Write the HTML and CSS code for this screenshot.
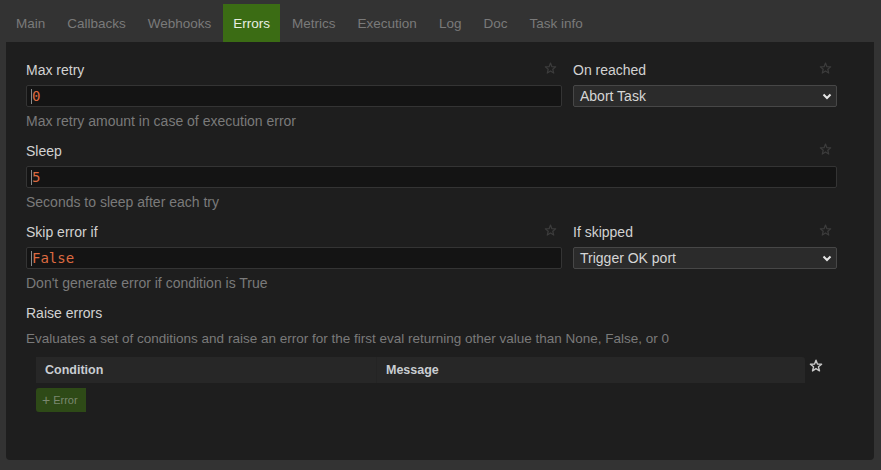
FILE: index.html
```html
<!DOCTYPE html>
<html>
<head>
<meta charset="utf-8">
<link rel="stylesheet" href="styles.css">
</head>
<body>
<nav class="tabs">
  <a class="tab">Main</a>
  <a class="tab">Callbacks</a>
  <a class="tab">Webhooks</a>
  <a class="tab active">Errors</a>
  <a class="tab">Metrics</a>
  <a class="tab">Execution</a>
  <a class="tab">Log</a>
  <a class="tab">Doc</a>
  <a class="tab">Task info</a>
</nav>
<main class="panel">
  <div class="row two">
    <div class="field">
      <div class="field-head"><span class="label">Max retry</span><svg class="star" viewBox="0 0 12 12"><path d="M6 1 L7.3 4.4 L10.8 4.5 L8.1 6.7 L9 10.2 L6 8.2 L3 10.2 L3.9 6.7 L1.2 4.5 L4.7 4.4 Z"/></svg></div>
      <div class="input"><span class="caret"></span><span class="code">0</span></div>
    </div>
    <div class="field">
      <div class="field-head"><span class="label">On reached</span><svg class="star" viewBox="0 0 12 12"><path d="M6 1 L7.3 4.4 L10.8 4.5 L8.1 6.7 L9 10.2 L6 8.2 L3 10.2 L3.9 6.7 L1.2 4.5 L4.7 4.4 Z"/></svg></div>
      <div class="select"><span>Abort Task</span><svg class="chev" viewBox="0 0 10 7"><path d="M1.5 1.5 L5 5 L8.5 1.5"/></svg></div>
    </div>
  </div>
  <p class="help">Max retry amount in case of execution error</p>

  <div class="row">
    <div class="field">
      <div class="field-head"><span class="label">Sleep</span><svg class="star" viewBox="0 0 12 12"><path d="M6 1 L7.3 4.4 L10.8 4.5 L8.1 6.7 L9 10.2 L6 8.2 L3 10.2 L3.9 6.7 L1.2 4.5 L4.7 4.4 Z"/></svg></div>
      <div class="input"><span class="caret"></span><span class="code">5</span></div>
    </div>
  </div>
  <p class="help">Seconds to sleep after each try</p>

  <div class="row two">
    <div class="field">
      <div class="field-head"><span class="label">Skip error if</span><svg class="star" viewBox="0 0 12 12"><path d="M6 1 L7.3 4.4 L10.8 4.5 L8.1 6.7 L9 10.2 L6 8.2 L3 10.2 L3.9 6.7 L1.2 4.5 L4.7 4.4 Z"/></svg></div>
      <div class="input"><span class="caret"></span><span class="code">False</span></div>
    </div>
    <div class="field">
      <div class="field-head"><span class="label">If skipped</span><svg class="star" viewBox="0 0 12 12"><path d="M6 1 L7.3 4.4 L10.8 4.5 L8.1 6.7 L9 10.2 L6 8.2 L3 10.2 L3.9 6.7 L1.2 4.5 L4.7 4.4 Z"/></svg></div>
      <div class="select"><span>Trigger OK port</span><svg class="chev" viewBox="0 0 10 7"><path d="M1.5 1.5 L5 5 L8.5 1.5"/></svg></div>
    </div>
  </div>
  <p class="help">Don't generate error if condition is True</p>

  <div class="section-title">Raise errors</div>
  <p class="desc">Evaluates a set of conditions and raise an error for the first eval returning other value than None, False, or 0</p>

  <div class="table-wrap">
    <div class="table">
      <div class="thead">
        <div class="th cond">Condition</div>
        <div class="th msg">Message</div>
      </div>
      <button class="add-btn"><span class="plus">+</span> Error</button>
    </div>
    <svg class="star bright" viewBox="0 0 12 12"><path d="M6 1 L7.3 4.4 L10.8 4.5 L8.1 6.7 L9 10.2 L6 8.2 L3 10.2 L3.9 6.7 L1.2 4.5 L4.7 4.4 Z"/></svg>
  </div>
</main>
</body>
</html>
```

FILE: styles.css
```css
* { box-sizing: border-box; }
html, body { margin: 0; height: 100%; }
body {
  background: #333333;
  font-family: "Liberation Sans", Arial, sans-serif;
  font-size: 14px;
  padding: 4px 0 10px 0;
  display: flex;
  flex-direction: column;
}
.tabs {
  display: flex;
  padding-left: 6px;
  height: 38px;
  flex: none;
}
.tab {
  display: flex;
  align-items: center;
  padding: 0 10px;
  margin-right: 2px;
  color: #7a7a7a;
  font-size: 13.5px;
}
.tab.active {
  background: #3b6c14;
  color: #e8eee2;
}
.panel {
  flex: 1;
  margin: 0 7px 0 6px;
  background: #1e1e1e;
  border-radius: 0 0 4px 4px;
  padding: 19px 37px 0 20px;
}
.row { display: grid; grid-template-columns: 1fr; }
.row.two { grid-template-columns: 536px 1fr; column-gap: 11px; }
.field { display: flex; flex-direction: column; }
.field-head {
  height: 18px;
  margin-bottom: 6px;
  display: flex;
  align-items: center;
  justify-content: space-between;
}
.label { color: #d2d2d2; font-size: 14px; }
.star {
  width: 13px;
  height: 13px;
  margin-right: 5px;
  margin-top: -3px;
  fill: none;
  stroke: #3c3c3c;
  stroke-width: 1.1;
  stroke-linejoin: round;
}
.star.bright { stroke: #c8c8c8; margin: 2px 0 0 4px; width: 14px; height: 14px; stroke-width: 1.2; }
.input {
  height: 22px;
  background: #141414;
  border: 1px solid #343434;
  border-radius: 2px;
  display: flex;
  align-items: center;
  padding-left: 4px;
}
.caret {
  width: 1px;
  height: 15px;
  background: #8a8a8a;
  margin-right: -1px;
}
.code {
  font-family: "DejaVu Sans Mono", "Liberation Mono", monospace;
  font-size: 14px;
  color: #dd6a41;
  padding-left: 1px;
}
.select {
  height: 22px;
  background: #2b2b2b;
  border: 1px solid #474747;
  border-radius: 2px;
  display: flex;
  align-items: center;
  justify-content: space-between;
  padding: 0 4px 0 6px;
  color: #d6d6d6;
  font-size: 14px;
}
.chev {
  width: 10px;
  height: 7px;
  fill: none;
  stroke: #e6e6e6;
  stroke-width: 2;
}
.help {
  margin: 5px 0 12px 0;
  line-height: 18px;
  color: #7a7a7a;
  font-size: 14px;
}
.section-title {
  color: #d2d2d2;
  font-size: 14px;
  line-height: 18px;
}
.desc {
  margin: 8px 0 9px 0;
  line-height: 18px;
  color: #7a7a7a;
  font-size: 13.5px;
}
.table-wrap {
  display: flex;
  align-items: flex-start;
  padding-left: 10px;
}
.table { width: 769px; }
.thead {
  display: flex;
  height: 26px;
  background: #272727;
  border-radius: 0 3px 0 0;
}
.th {
  display: flex;
  align-items: center;
  color: #c9cdd2;
  font-weight: bold;
  font-size: 12.5px;
}
.th.cond { width: 341px; padding-left: 9px; border-right: 1px solid #242424; }
.th.msg { flex: 1; padding-left: 9px; }
.add-btn {
  margin-top: 5px;
  width: 50px;
  height: 24px;
  background: #2e4a17;
  border: none;
  border-radius: 3px 0 0 3px;
  color: #7b8870;
  font-family: "Liberation Sans", Arial, sans-serif;
  font-size: 11px;
  padding: 0 0 0 6px;
  text-align: left;
  display: flex;
  align-items: center;
}
.plus { font-size: 14px; margin-right: 3px; font-weight: 300; }
```
